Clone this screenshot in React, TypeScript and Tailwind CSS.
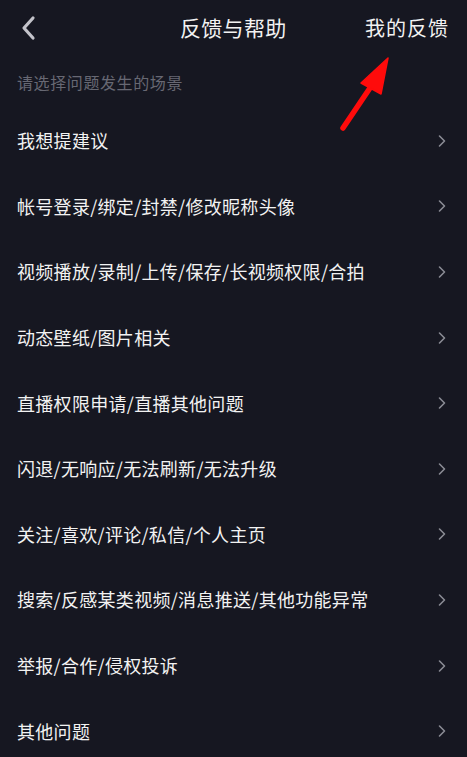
import React from "react";

const items = [
  "我想提建议",
  "帐号登录/绑定/封禁/修改昵称头像",
  "视频播放/录制/上传/保存/长视频权限/合拍",
  "动态壁纸/图片相关",
  "直播权限申请/直播其他问题",
  "闪退/无响应/无法刷新/无法升级",
  "关注/喜欢/评论/私信/个人主页",
  "搜索/反感某类视频/消息推送/其他功能异常",
  "举报/合作/侵权投诉",
  "其他问题",
];

function Chevron() {
  return (
    <svg width="10" height="14" viewBox="0 0 10 14" fill="none">
      <path d="M2.5 2 L7.5 7 L2.5 12" stroke="#8a8b94" strokeWidth="1.6" strokeLinecap="round" strokeLinejoin="round" />
    </svg>
  );
}

export default function App() {
  return (
    <div
      className="relative w-[467px] h-[757px] overflow-hidden bg-[#161721] text-[#f2f2f2]"
      style={{ fontFamily: '"Noto Sans CJK SC", "Noto Sans", sans-serif' }}
    >
      <div className="h-[55px] flex items-center relative">
        <div className="w-[60px] pl-[20px] flex items-center">
          <svg width="18" height="26" viewBox="0 0 18 26" fill="none">
            <path d="M13 3 L4 13 L13 23" stroke="#c3c3ca" strokeWidth="3.2" strokeLinecap="round" strokeLinejoin="round" />
          </svg>
        </div>
        <div className="absolute left-[180px] top-0 h-[55px] flex items-center text-[21px] tracking-[0.3px]">反馈与帮助</div>
        <div className="ml-auto pr-[18px] text-[20px] tracking-[1px]">我的反馈</div>
      </div>
      <div className="h-[53px] flex items-start pt-[15px] pl-[17px] text-[16px] tracking-[0.6px] text-[#676873]">
        请选择问题发生的场景
      </div>
      <div className="flex flex-col">
        {items.map((t) => (
          <div key={t} className="h-[65.6px] flex items-center pl-[17px] pr-[20px]">
            <span className="text-[18px] tracking-[0.3px] flex-1">{t}</span>
            <Chevron />
          </div>
        ))}
      </div>
      <svg className="absolute left-0 top-0 pointer-events-none" width="467" height="757">
        <line x1="343" y1="128" x2="372" y2="85" stroke="#ff0b0b" strokeWidth="5.5" strokeLinecap="round" />
        <polygon points="388,58 361,83 381,94" fill="#ff0b0b" stroke="#ff0b0b" strokeWidth="1.5" strokeLinejoin="round" />
      </svg>
    </div>
  );
}
